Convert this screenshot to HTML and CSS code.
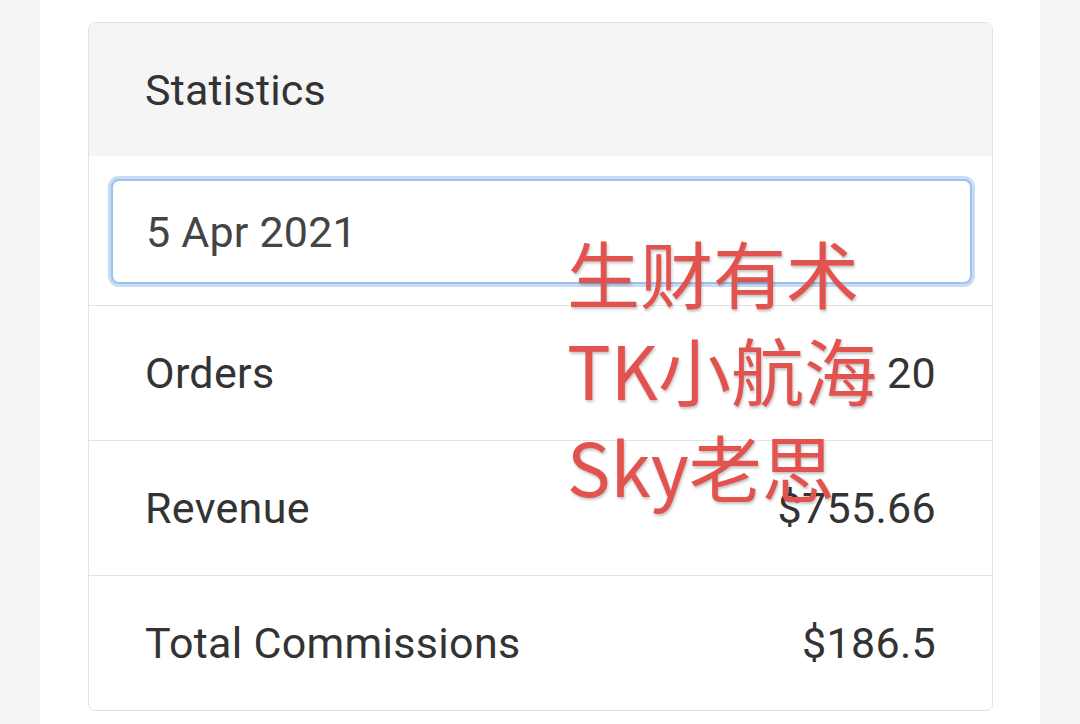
FILE: index.html
```html
<!DOCTYPE html>
<html lang="zh-CN">
<head>
    <meta charset="UTF-8">
    <meta name="viewport" content="width=device-width, initial-scale=1.0">
    <title>Statistics</title>
    <link rel="stylesheet" href="styles.css">
</head>
<body>
    <main class="page">
        <div class="card">
            <div class="card-header">Statistics</div>

            <div class="date-box">
                <input class="date-input" type="text" value="5 Apr 2021">
            </div>

            <ul class="stats">
                <li class="stat-row">
                    <span>Orders</span>
                    <span>20</span>
                </li>
                <li class="stat-row">
                    <span>Revenue</span>
                    <span>$755.66</span>
                </li>
                <li class="stat-row">
                    <span>Total Commissions</span>
                    <span>$186.5</span>
                </li>
            </ul>

            <!-- watermark sits over the card -->
            <div class="watermark">
                <div>生财有术</div>
                <div>TK小航海</div>
                <div>Sky老思</div>
            </div>
        </div>
    </main>
</body>
</html>
```

FILE: styles.css
```css
:root {
    --page-bg: #f3f4f5;
    --text-color: #333333;
    --border-color: #e2e2e2;
    --header-bg: #f5f5f5;
    --focus-color: #9cc3ef;
    --mark-color: #e2524e;
}

body {
    margin: 0;
    background-color: var(--page-bg);
    font-family: Roboto, "Noto Sans", Arial, sans-serif;
    color: var(--text-color);
}

.page {
    width: 1000px;
    margin: 0 auto;
    background-color: #ffffff;
    min-height: 724px;
    padding: 22px 47px 0 48px;
    box-sizing: border-box;
}

.card {
    position: relative;
    border: 1.5px solid var(--border-color);
    border-radius: 7px;
    background-color: #ffffff;
    overflow: hidden;
}

.card-header {
    background-color: var(--header-bg);
    height: 133px;
    padding-left: 56px;
    display: flex;
    align-items: center;
    font-size: 43px;
    letter-spacing: 0.2px;
}

.date-box {
    padding: 23px 20px 21px 22px;
    border-bottom: 1.5px solid var(--border-color);
}

.date-input {
    display: block;
    width: 100%;
    box-sizing: border-box;
    height: 105px;
    border: 2px solid var(--focus-color);
    border-radius: 8px;
    box-shadow: 0 0 0 3px #c8dcf3;
    padding: 0 33px;
    font-family: inherit;
    font-size: 43px;
    letter-spacing: 0.2px;
    color: #444444;
    outline: none;
}

.stats {
    list-style: none;
    margin: 0;
    padding: 0;
}

.stat-row {
    display: flex;
    justify-content: space-between;
    align-items: center;
    height: 134px;
    padding: 0 56px;
    font-size: 43px;
    letter-spacing: 0.3px;
    border-bottom: 1.5px solid var(--border-color);
}

.stat-row:last-child {
    border-bottom: none;
}

.watermark {
    position: absolute;
    left: 478px;
    top: 200px;
    font-family: "Noto Sans CJK SC", "Noto Sans", sans-serif;
    font-size: 73px;
    font-weight: 400;
    line-height: 97px;
    color: var(--mark-color);
    text-shadow: 1px 2px 3px rgba(0, 0, 0, 0.25);
    pointer-events: none;
}
```
